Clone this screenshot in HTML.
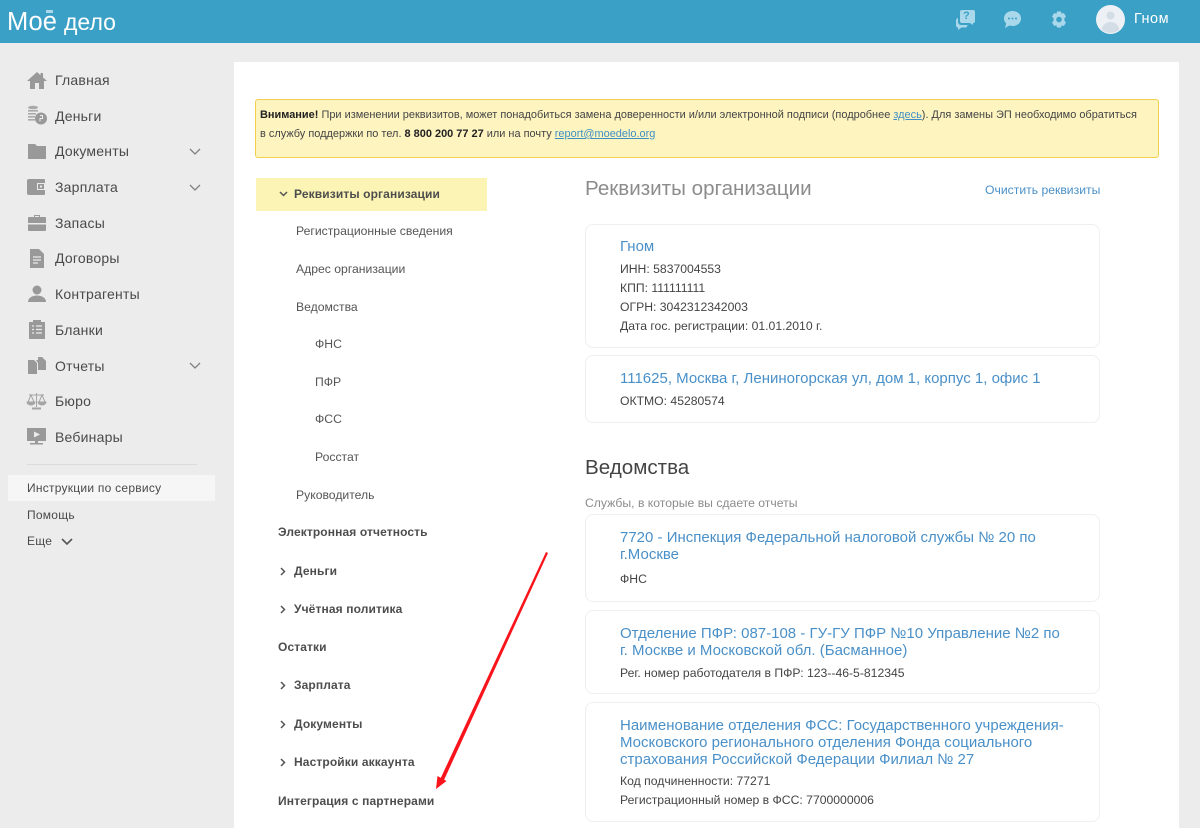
<!DOCTYPE html>
<html lang="ru"><head><meta charset="utf-8"><title>Моё дело</title>
<style>
html,body{margin:0;padding:0}
body{width:1200px;height:828px;position:relative;overflow:hidden;background:#ececec;font-family:"Liberation Sans",sans-serif;color:#444}
.t{position:absolute;white-space:nowrap;line-height:20px}
.a{position:absolute}
.nav{font-size:14px;left:55px;color:#4a4a4a;letter-spacing:.22px}
.sm{font-size:12px;left:27px;color:#4a4a4a;letter-spacing:.25px}
.m{font-size:12.2px;color:#555}
.b{font-size:12px;font-weight:bold;color:#4d4d4d;letter-spacing:.12px}
.card{position:absolute;left:585px;width:515px;background:#fff;border:1px solid #efefef;border-radius:8px;box-sizing:border-box}
.l{font-size:15px;color:#4a90c8;line-height:17px}
.d{font-size:12.2px;color:#444}
svg{position:absolute;overflow:visible}
a{color:#3f8fc4}
</style></head><body>
<div class="a" style="left:0;top:0;width:1200px;height:43px;background:#3ba0c6"></div>
<div class="t" style="left:7px;top:12px;font-size:25.500px;color:#fff">Мое</div>
<div class="a" style="left:46px;top:10px;width:7px;height:3px;background:#a9d9ea"></div>
<div class="t" style="left:64px;top:12px;font-size:23px;color:#fff">дело</div>
<svg style="left:955px;top:9px" width="22" height="22" viewBox="0 0 22 22" fill="#a8d8ea"><path d="M3 9c-1 .3-2 1-2 2.500v5c0 1 .8 2 2 2v2.500l3.500-2.500H10c1.500 0 2.500-1 2.500-2.500H6a3 3 0 0 1-3-3z"/><path d="M5 3a2 2 0 0 1 2-2h11a2 2 0 0 1 2 2v9a2 2 0 0 1-2 2v2l-3-2H7a2 2 0 0 1-2-2z"/></svg>
<div class="t" style="left:963px;top:6px;font-size:11px;font-weight:bold;color:#3ba0c6">?</div>
<svg style="left:1003px;top:10px" width="19" height="19" viewBox="0 0 19 19"><path fill="#a8d8ea" d="M9.500 1C14.500 1 18 4.200 18 8.500S14.500 16 9.500 16c-1 0-2-.2-3-.5L2 18l1.200-4.500C1.800 12.200 1 10.500 1 8.500 1 4.200 4.500 1 9.500 1z"/><circle cx="6" cy="8.500" r="1" fill="#3ba0c6"/><circle cx="9.500" cy="8.500" r="1" fill="#3ba0c6"/><circle cx="13" cy="8.500" r="1" fill="#3ba0c6"/></svg>
<svg style="left:1051px;top:11px" width="16" height="17" viewBox="0 0 16 17"><path fill="#a8d8ea" d="M6 .5h4l.6 2.200 2.200-.7 2.200 3.500-1.600 1.700v2.600L15 11.500 12.800 15l-2.200-.7L10 16.500H6l-.6-2.200-2.200.7L1 11.500l1.600-1.700V7.200L1 5.500 3.200 2l2.200.7z"/><circle cx="8" cy="8.500" r="2.800" fill="#3ba0c6"/></svg>
<svg style="left:1096px;top:5px" width="29" height="29" viewBox="0 0 29 29"><circle cx="14.500" cy="14.500" r="14.500" fill="#edf1f5"/><circle cx="14.500" cy="10.500" r="4" fill="#d3dde6"/><path d="M6 25c0-5 4-8 8.500-8s8.500 3 8.500 8a14.500 14.500 0 0 1-17 0z" fill="#d3dde6"/></svg>
<div class="t" style="left:1134px;top:9px;font-size:14.500px;color:#fff;letter-spacing:.5px">Гном</div>

<svg style="left:27px;top:71px" width="20" height="18" viewBox="0 0 20 18" fill="#999"><path d="M10 1L0 10h3v8h5v-6h4v6h5v-8h3l-4-3.600V2h-2.500v2.200z"/></svg>
<svg style="left:27px;top:105px" width="20" height="20" viewBox="0 0 20 20" fill="#aaa"><ellipse cx="6" cy="2.500" rx="5" ry="1.800"/><rect x="1" y="5" width="10" height="1.600"/><rect x="1" y="8" width="8" height="1.600"/><rect x="1" y="11" width="7" height="1.600"/><rect x="1" y="14" width="7" height="1.600"/><circle cx="14" cy="13.500" r="6" fill="#999"/><path d="M13 10.500h2.500v3H13v3" stroke="#ececec" fill="none"/></svg>
<svg style="left:28px;top:143px" width="18" height="16" viewBox="0 0 18 16" fill="#999"><path d="M0 1h7l2 2h9v13H0z"/></svg>
<svg style="left:27px;top:178px" width="19" height="18" viewBox="0 0 19 18" fill="#999"><path d="M2 1h15a1 1 0 0 1 1 1v14a1 1 0 0 1-1 1H2a2 2 0 0 1-2-2V3a2 2 0 0 1 2-2z"/><rect x="10" y="5" width="9" height="7" fill="#ececec"/><rect x="11" y="6" width="6" height="5" fill="#999"/><rect x="13" y="7.500" width="2" height="2" fill="#ececec"/></svg>
<svg style="left:28px;top:214px" width="18" height="17" viewBox="0 0 18 17" fill="#999"><path d="M6 3V1h6v2h5a1 1 0 0 1 1 1v5H0V4a1 1 0 0 1 1-1zm1 0h4V2H7z"/><path d="M0 10.500h18V16a1 1 0 0 1-1 1H1a1 1 0 0 1-1-1z"/></svg>
<svg style="left:30px;top:249px" width="14" height="19" viewBox="0 0 14 19" fill="#999"><path d="M0 0h9l5 5v14H0z"/><path d="M3 8h8M3 11h8M3 14h5" stroke="#ececec" stroke-width="1.200"/></svg>
<svg style="left:28px;top:285px" width="18" height="18" viewBox="0 0 18 18" fill="#999"><circle cx="9" cy="5" r="4.500"/><path d="M0 17c0-4 4-6.500 9-6.500s9 2.500 9 6.500z"/></svg>
<svg style="left:29px;top:320px" width="16" height="19" viewBox="0 0 16 19" fill="#999"><path d="M0 2h4V0h8v2h4v17H0z"/><path d="M3 6h2M7 6h6M3 9.500h2M7 9.500h6M3 13h2M7 13h6" stroke="#ececec" stroke-width="1.300"/></svg>
<svg style="left:28px;top:357px" width="19" height="17" viewBox="0 0 19 17" fill="#999"><path d="M0 3h6l3 3v11H0z"/><path d="M10 0h4l4 4v9h-8V6L8 3h2z"/></svg>
<svg style="left:27px;top:392px" width="19" height="18" viewBox="0 0 19 18" fill="none" stroke="#a5a5a5" stroke-width="1"><path d="M9.500 1v14M2 3h15M4 3l-3 7h6zM15 3l-3 7h6z"/><path d="M0 10h8a4 3 0 0 1-8 0zM11 10h8a4 3 0 0 1-8 0z" fill="#a5a5a5"/><path d="M5 16.500h9" stroke-width="2"/></svg>
<svg style="left:27px;top:428px" width="19" height="18" viewBox="0 0 19 18" fill="#999"><rect width="19" height="13"/><path d="M7 3.500l6 3-6 3z" fill="#ececec"/><rect x="8" y="13" width="3" height="2"/><rect x="3" y="15" width="13" height="1.500"/></svg>

<div class="t nav" style="top:70px">Главная</div>
<div class="t nav" style="top:106px">Деньги</div>
<div class="t nav" style="top:141px">Документы</div>
<div class="t nav" style="top:177px">Зарплата</div>
<div class="t nav" style="top:213px">Запасы</div>
<div class="t nav" style="top:248px">Договоры</div>
<div class="t nav" style="top:284px">Контрагенты</div>
<div class="t nav" style="top:320px">Бланки</div>
<div class="t nav" style="top:356px">Отчеты</div>
<div class="t nav" style="top:391px">Бюро</div>
<div class="t nav" style="top:427px">Вебинары</div>
<svg style="left:189px;top:148px" width="12" height="7" fill="none" stroke="#808080" stroke-width="1.300"><path d="M1 1l5 5 5-5"/></svg>
<svg style="left:189px;top:184px" width="12" height="7" fill="none" stroke="#808080" stroke-width="1.300"><path d="M1 1l5 5 5-5"/></svg>
<svg style="left:189px;top:362px" width="12" height="7" fill="none" stroke="#808080" stroke-width="1.300"><path d="M1 1l5 5 5-5"/></svg>
<div class="a" style="left:27px;top:464px;width:170px;height:1px;background:#dcdcdc"></div>
<div class="a" style="left:8px;top:475px;width:207px;height:26px;background:#f6f6f6"></div>
<div class="t sm" style="top:478px">Инструкции по сервису</div>
<div class="t sm" style="top:505px">Помощь</div>
<div class="t sm" style="top:531px">Еще</div>
<svg style="left:61px;top:538px" width="12" height="7" fill="none" stroke="#555" stroke-width="1.600"><path d="M1 1l5 5 5-5"/></svg>

<div class="a" style="left:234px;top:62px;width:945px;height:766px;background:#fff"></div>
<div class="a" style="left:255px;top:99px;width:904px;height:59px;box-sizing:border-box;background:#fdf4c0;border:1px solid #f1d04f;border-radius:3px"></div>
<div class="t" style="left:260px;top:105px;font-size:10.960px;color:#444"><b style="color:#222">Внимание!</b> При изменении реквизитов, может понадобиться замена доверенности и/или электронной подписи (подробнее <a href="#">здесь</a>). Для замены ЭП необходимо обратиться</div>
<div class="t" style="left:260px;top:124px;font-size:10.960px;color:#444">в службу поддержки по тел. <b style="color:#222">8 800 200 77 27</b> или на почту <a href="#">report@moedelo.org</a></div>

<div class="a" style="left:256px;top:178px;width:231px;height:33px;background:#fbf4b4"></div>
<svg style="left:279px;top:191px" width="9" height="6" fill="none" stroke="#555" stroke-width="1.500"><path d="M1 1l3.500 3.500L8 1"/></svg>
<div class="t b" style="left:294px;top:184px">Реквизиты организации</div>
<div class="t m" style="left:296px;top:221px">Регистрационные сведения</div>
<div class="t m" style="left:296px;top:259px">Адрес организации</div>
<div class="t m" style="left:296px;top:297px">Ведомства</div>
<div class="t m" style="left:315px;top:334px">ФНС</div>
<div class="t m" style="left:315px;top:372px">ПФР</div>
<div class="t m" style="left:315px;top:409px">ФСС</div>
<div class="t m" style="left:315px;top:447px">Росстат</div>
<div class="t m" style="left:296px;top:485px">Руководитель</div>
<div class="t b" style="left:278px;top:522px">Электронная отчетность</div>
<div class="t b" style="left:294px;top:561px">Деньги</div>
<div class="t b" style="left:294px;top:599px">Учётная политика</div>
<div class="t b" style="left:278px;top:637px">Остатки</div>
<div class="t b" style="left:294px;top:675px">Зарплата</div>
<div class="t b" style="left:294px;top:714px">Документы</div>
<div class="t b" style="left:294px;top:752px">Настройки аккаунта</div>
<div class="t b" style="left:278px;top:791px">Интеграция с партнерами</div>
<svg style="left:280px;top:567px" width="6" height="9" fill="none" stroke="#555" stroke-width="1.500"><path d="M1 1l3.500 3.500L1 8"/></svg>
<svg style="left:280px;top:605px" width="6" height="9" fill="none" stroke="#555" stroke-width="1.500"><path d="M1 1l3.500 3.500L1 8"/></svg>
<svg style="left:280px;top:681px" width="6" height="9" fill="none" stroke="#555" stroke-width="1.500"><path d="M1 1l3.500 3.500L1 8"/></svg>
<svg style="left:280px;top:720px" width="6" height="9" fill="none" stroke="#555" stroke-width="1.500"><path d="M1 1l3.500 3.500L1 8"/></svg>
<svg style="left:280px;top:758px" width="6" height="9" fill="none" stroke="#555" stroke-width="1.500"><path d="M1 1l3.500 3.500L1 8"/></svg>

<div class="t" style="left:585px;top:179px;font-size:20.600px;color:#8c8c8c">Реквизиты организации</div>
<div class="t" style="left:985px;top:180px;font-size:12.200px;color:#4a90c8">Очистить реквизиты</div>

<div class="card" style="top:224px;height:124px"></div>
<div class="t l" style="left:620px;top:238px">Гном</div>
<div class="t d" style="left:620px;top:259px">ИНН: 5837004553</div>
<div class="t d" style="left:620px;top:278px">КПП: 111111111</div>
<div class="t d" style="left:620px;top:297px">ОГРН: 3042312342003</div>
<div class="t d" style="left:620px;top:316px">Дата гос. регистрации: 01.01.2010 г.</div>

<div class="card" style="top:355px;height:68px"></div>
<div class="t l" style="left:620px;top:370px">111625, Москва г, Лениногорская ул, дом 1, корпус 1, офис 1</div>
<div class="t d" style="left:620px;top:391px">ОКТМО: 45280574</div>

<div class="t" style="left:585px;top:458px;font-size:20.600px;color:#444">Ведомства</div>
<div class="t" style="left:585px;top:493px;font-size:12.200px;color:#8c8c8c">Службы, в которые вы сдаете отчеты</div>

<div class="card" style="top:514px;height:88px"></div>
<div class="t l" style="left:620px;top:529px">7720 - Инспекция Федеральной налоговой службы № 20 по<br>г.Москве</div>
<div class="t d" style="left:620px;top:569px">ФНС</div>

<div class="card" style="top:610px;height:84px"></div>
<div class="t l" style="left:620px;top:625px">Отделение ПФР: 087-108 - ГУ-ГУ ПФР №10 Управление №2 по<br>г. Москве и Московской обл. (Басманное)</div>
<div class="t d" style="left:620px;top:663px">Рег. номер работодателя в ПФР: 123--46-5-812345</div>

<div class="card" style="top:702px;height:120px"></div>
<div class="t l" style="left:620px;top:717px">Наименование отделения ФСС: Государственного учреждения-<br>Московского регионального отделения Фонда социального<br>страхования Российской Федерации Филиал № 27</div>
<div class="t d" style="left:620px;top:771px">Код подчиненности: 77271</div>
<div class="t d" style="left:620px;top:790px">Регистрационный номер в ФСС: 7700000006</div>

<svg style="left:0;top:0" width="1200" height="828"><path d="M546 552L548 553L444 780L440.500 778.500z" fill="#f8141a"/><path d="M436 789l1.500-13 9 5z" fill="#f8141a"/></svg>
</body></html>
